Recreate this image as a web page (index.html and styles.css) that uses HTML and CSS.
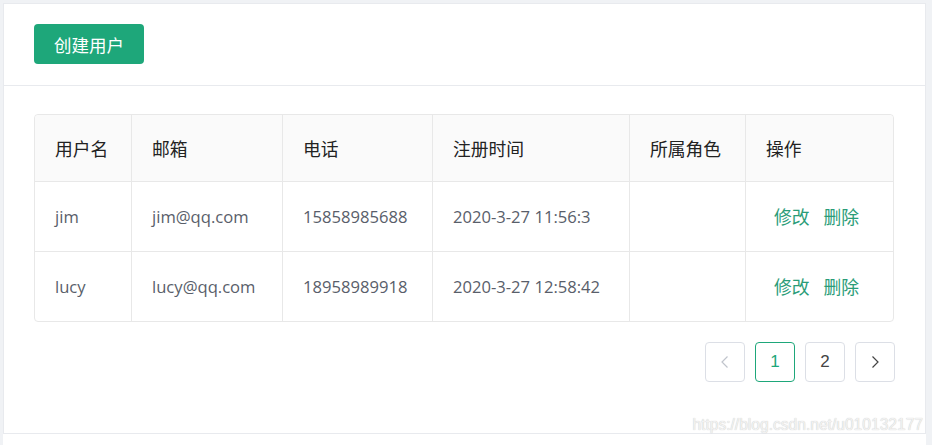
FILE: index.html
```html
<!DOCTYPE html>
<html lang="zh-CN">
<head>
<meta charset="utf-8">
<title>用户管理</title>
<link rel="stylesheet" href="styles.css">
</head>
<body>
<div class="page">
  <div class="card">
    <div class="card-head">
      <button class="btn-primary">创建用户</button>
    </div>
    <div class="card-body">
      <table class="table">
        <colgroup>
          <col class="c1">
          <col class="c2">
          <col class="c3">
          <col class="c4">
          <col class="c5">
          <col class="c6">
        </colgroup>
        <thead>
          <tr>
            <th>用户名</th>
            <th>邮箱</th>
            <th>电话</th>
            <th>注册时间</th>
            <th>所属角色</th>
            <th>操作</th>
          </tr>
        </thead>
        <tbody>
          <tr>
            <td>jim</td>
            <td>jim@qq.com</td>
            <td>15858985688</td>
            <td>2020-3-27 11:56:3</td>
            <td></td>
            <td class="ops"><a class="link">修改</a><a class="link">删除</a></td>
          </tr>
          <tr>
            <td>lucy</td>
            <td>lucy@qq.com</td>
            <td>18958989918</td>
            <td>2020-3-27 12:58:42</td>
            <td></td>
            <td class="ops"><a class="link">修改</a><a class="link">删除</a></td>
          </tr>
        </tbody>
      </table>
      <div class="pager">
        <button class="pg disabled" aria-label="上一页">
          <svg width="14" height="14" viewBox="0 0 14 14"><path d="M9.5 1.5 L4 7 L9.5 12.5" fill="none" stroke="currentColor" stroke-width="1.2"/></svg>
        </button>
        <button class="pg active">1</button>
        <button class="pg">2</button>
        <button class="pg" aria-label="下一页">
          <svg width="14" height="14" viewBox="0 0 14 14"><path d="M4.5 1.5 L10 7 L4.5 12.5" fill="none" stroke="currentColor" stroke-width="1.2"/></svg>
        </button>
      </div>
    </div>
    <div class="watermark">https://blog.csdn.net/u010132177</div>
  </div>
  <div class="card-next"></div>
</div>
</body>
</html>
```

FILE: styles.css
```css
* { box-sizing: border-box; }
html, body {
  margin: 0;
  padding: 0;
  background: #f0f2f5;
  font-family: "Open Sans", "Noto Sans CJK SC", sans-serif;
  height: 445px;
  overflow: hidden;
}
.page {
  padding: 3px 6px 0 3px;
}
.card {
  position: relative;
  background: #fff;
  border: 1px solid #e8eaee;
  height: 431px;
}
.card-next {
  background: #fff;
  height: 20px;
}
.card-head {
  padding: 20px 30px 21px;
  border-bottom: 1px solid #e8eaee;
}
.btn-primary {
  display: block;
  width: 110px;
  height: 40px;
  border: none;
  border-radius: 4px;
  background: #1ea77a;
  color: #fff;
  font-family: "Noto Sans CJK SC", sans-serif;
  font-size: 17.5px;
  padding: 0;
}
.card-body {
  padding: 28px 31px 0 30px;
}
.table {
  width: 860px;
  border-collapse: separate;
  border-spacing: 0;
  table-layout: fixed;
  border: 1px solid #e8e8e8;
  border-radius: 4px;
  font-size: 16.6px;
  line-height: 22px;
}
.c1 { width: 97px; }
.c2 { width: 151px; }
.c3 { width: 150px; }
.c4 { width: 197px; }
.c5 { width: 116px; }
.c6 { width: 147px; }
.table th, .table td {
  text-align: left;
  padding: 0 0 0 20px;
  border-right: 1px solid #e8e8e8;
  border-bottom: 1px solid #e8e8e8;
  white-space: nowrap;
}
.table th:last-child, .table td:last-child { border-right: none; }
.table tbody tr:last-child td { border-bottom: none; }
.table th {
  height: 67px;
  background: #fafafa;
  color: #222;
  font-weight: 400;
  font-size: 17.8px;
  font-family: "Noto Sans CJK SC", sans-serif;
}
.table thead th:first-child { border-top-left-radius: 4px; }
.table thead th:last-child { border-top-right-radius: 4px; }
.table td {
  height: 70px;
  color: #595e6a;
}
.table tbody tr:last-child td { height: 69px; }
.table td.ops { padding-left: 28px; }
.link {
  color: #2a9c78;
  font-family: "Noto Sans CJK SC", sans-serif;
  font-size: 17.8px;
  line-height: 22px;
  margin-right: 14px;
  cursor: pointer;
}
.pager {
  display: flex;
  justify-content: flex-end;
  gap: 10px;
  margin-top: 20px;
  margin-right: -1px;
}
.pg {
  width: 40px;
  height: 40px;
  display: flex;
  align-items: center;
  justify-content: center;
  background: #fff;
  border: 1px solid #dcdfe6;
  border-radius: 4px;
  color: #444;
  font-family: "Liberation Sans", Arial, sans-serif;
  font-size: 17px;
  padding: 0;
}
.pg.active {
  border-color: #1ea77a;
  color: #1ea77a;
}
.pg.disabled { color: #c0c4cc; }
.watermark {
  position: absolute;
  right: 2px;
  bottom: -1px;
  font-family: "Liberation Sans", Arial, sans-serif;
  font-size: 15.6px;
  color: #f2f2f2;
  text-shadow: 0 0 1px #bdbdbd;
}
```
